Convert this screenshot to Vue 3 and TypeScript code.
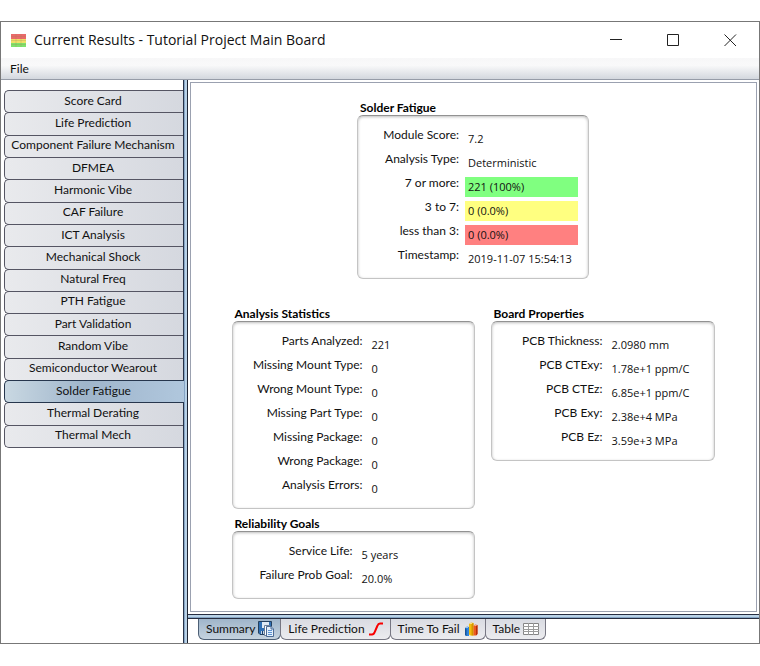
<script setup lang="ts">
import { ref } from 'vue'

interface Row {
  label: string
  value: string
  tone?: 'good' | 'warn' | 'bad'
}

interface Group {
  title: string
  kind: string
  rows: Row[]
}

const modules: string[] = [
  'Score Card',
  'Life Prediction',
  'Component Failure Mechanism',
  'DFMEA',
  'Harmonic Vibe',
  'CAF Failure',
  'ICT Analysis',
  'Mechanical Shock',
  'Natural Freq',
  'PTH Fatigue',
  'Part Validation',
  'Random Vibe',
  'Semiconductor Wearout',
  'Solder Fatigue',
  'Thermal Derating',
  'Thermal Mech',
]

const views: string[] = ['Summary', 'Life Prediction', 'Time To Fail', 'Table']

const activeModule = ref('Solder Fatigue')
const activeView = ref('Summary')

const columns: { name: string; groups: Group[] }[] = [
  {
    name: 'top',
    groups: [
      {
        title: 'Solder Fatigue',
        kind: 'score',
        rows: [
          { label: 'Module Score:', value: '7.2' },
          { label: 'Analysis Type:', value: 'Deterministic' },
          { label: '7 or more:', value: '221 (100%)', tone: 'good' },
          { label: '3 to 7:', value: '0 (0.0%)', tone: 'warn' },
          { label: 'less than 3:', value: '0 (0.0%)', tone: 'bad' },
          { label: 'Timestamp:', value: '2019-11-07 15:54:13' },
        ],
      },
    ],
  },
  {
    name: 'left',
    groups: [
      {
        title: 'Analysis Statistics',
        kind: 'stats',
        rows: [
          { label: 'Parts Analyzed:', value: '221' },
          { label: 'Missing Mount Type:', value: '0' },
          { label: 'Wrong Mount Type:', value: '0' },
          { label: 'Missing Part Type:', value: '0' },
          { label: 'Missing Package:', value: '0' },
          { label: 'Wrong Package:', value: '0' },
          { label: 'Analysis Errors:', value: '0' },
        ],
      },
      {
        title: 'Reliability Goals',
        kind: 'goals',
        rows: [
          { label: 'Service Life:', value: '5 years' },
          { label: 'Failure Prob Goal:', value: '20.0%' },
        ],
      },
    ],
  },
  {
    name: 'right',
    groups: [
      {
        title: 'Board Properties',
        kind: 'board',
        rows: [
          { label: 'PCB Thickness:', value: '2.0980 mm' },
          { label: 'PCB CTExy:', value: '1.78e+1 ppm/C' },
          { label: 'PCB CTEz:', value: '6.85e+1 ppm/C' },
          { label: 'PCB Exy:', value: '2.38e+4 MPa' },
          { label: 'PCB Ez:', value: '3.59e+3 MPa' },
        ],
      },
    ],
  },
]
</script>

<template>
  <div class="window">
    <header class="titlebar">
      <svg class="app-icon" viewBox="0 0 15 13" aria-hidden="true">
        <rect width="15" height="5" fill="#e96a6a" />
        <rect y="5" width="15" height="4" fill="#f0e068" />
        <rect y="9" width="15" height="4" fill="#7fe36c" />
        <path d="M0 2.5h15M0 6.5h15M0 10.5h15M5 0v13M10 0v13" stroke="#a08050" stroke-opacity=".25" />
      </svg>
      <h1>Current Results - Tutorial Project Main Board</h1>
      <div class="controls">
        <button type="button" aria-label="Minimize">
          <svg viewBox="0 0 13 13"><path d="M0 5.5h12" /></svg>
        </button>
        <button type="button" aria-label="Maximize">
          <svg viewBox="0 0 13 13"><path d="M.5 .5h11v11H.5z" /></svg>
        </button>
        <button type="button" aria-label="Close">
          <svg viewBox="0 0 13 13"><path d="M.5 .5l11.5 11.5M12 .5L.5 12" /></svg>
        </button>
      </div>
    </header>

    <nav class="menubar"><button type="button">File</button></nav>

    <div class="body">
      <nav class="modules">
        <button
          v-for="name in modules"
          :key="name"
          type="button"
          :class="{ active: name === activeModule }"
          @click="activeModule = name"
        >{{ name }}</button>
      </nav>

      <main class="main">
        <div class="panel">
          <section v-for="col in columns" :key="col.name" class="column" :class="col.name">
            <div v-for="group in col.groups" :key="group.title" class="group" :class="group.kind">
              <h2>{{ group.title }}</h2>
              <dl>
                <template v-for="row in group.rows" :key="row.label">
                  <dt>{{ row.label }}</dt>
                  <dd :class="row.tone">{{ row.value }}</dd>
                </template>
              </dl>
            </div>
          </section>
        </div>

        <nav class="views">
          <button
            v-for="view in views"
            :key="view"
            type="button"
            :class="{ active: view === activeView }"
            @click="activeView = view"
          >
            <span>{{ view }}</span>
            <svg v-if="view === 'Summary'" viewBox="0 0 16 16" aria-hidden="true">
              <path d="M.5 .5h13v13H2L.5 12z" fill="#2f6fb4" stroke="#24405f" />
              <path d="M4 1h7v6H4z" fill="#dfeaf5" />
              <path d="M3 10h4v3H3z" fill="#c4d4e4" />
              <path d="M4 10h1v3H4z" fill="#173d6e" />
              <path d="M6.500 4.500h5v10h-5z" fill="#fff" stroke="#6b7f99" />
              <path d="M8.500 5.500h4.500l2.500 2.500v7.500h-7z" fill="#e3effc" stroke="#4d6b94" />
              <path d="M13 5.500v2.500h2.500" fill="#bcd6f2" stroke="#4d6b94" />
              <path d="M10 9.500h4M10 11.500h4M10 13.500h4" stroke="#5b92d2" />
            </svg>
            <svg v-else-if="view === 'Life Prediction'" viewBox="0 0 16 16" aria-hidden="true">
              <path d="M1 13.500h3c1.500 0 2-.5 2.700-2.500l2.600-6c.7-1.800 1.200-2.500 2.700-2.500H15" fill="none" stroke="#f80000" stroke-width="2" />
            </svg>
            <svg v-else-if="view === 'Time To Fail'" viewBox="0 0 16 16" aria-hidden="true">
              <path d="M2 7l2-1.500L6 6v9H3l-1-1z" fill="#2f83dc" />
              <path d="M2 7l1.500 1V15L2 14z" fill="#185499" />
              <path d="M6 3l2-1.500L10.500 2v12.500H7.500L6 13.500z" fill="#f2bd10" />
              <path d="M8.500 3l2-1v12.500h-2z" fill="#d49400" />
              <path d="M10.500 5L12 3.500l2.500 .5v9l-1.500 1.500h-2.500z" fill="#ed5a20" />
              <path d="M13 5l1.500-1v9L13 14.500z" fill="#b52c0c" />
              <path d="M3 6.500h2M7 2.500h2M11.500 4.500h2" stroke="#fff" stroke-opacity=".5" />
            </svg>
            <svg v-else viewBox="0 0 16 16" aria-hidden="true">
              <path d="M.5 2.500h15v11H.5z" fill="#fff" stroke="#858585" />
              <path d="M0 5.500h16M0 8.500h16M0 10.500h16M5.500 2v12M10.500 2v12" stroke="#9b9b9b" />
            </svg>
          </button>
        </nav>
      </main>
    </div>
  </div>
</template>

<style>
body {
  margin: 0;
  background: #fff;
}
</style>

<style scoped>
.window {
  box-sizing: border-box;
  display: flex;
  flex-direction: column;
  min-height: calc(100vh - 43px);
  margin: 21px 0 22px;
  border: 1px solid #777;
  background: #fff;
  color: #111;
  font: 12px/16px Lato, "Open Sans", sans-serif;
}

button {
  margin: 0;
  padding: 0;
  border: 0;
  background: none;
  color: inherit;
  font: inherit;
}

.titlebar {
  display: flex;
  align-items: center;
  height: 36px;
  padding-left: 10px;
}

.app-icon {
  width: 15px;
  height: 13px;
}

h1 {
  flex: 1;
  margin: 0 0 0 8px;
  font-family: "Open Sans", sans-serif;
  font-size: 14px;
  font-weight: 400;
  line-height: 20px;
}

.controls {
  display: flex;
}

.controls button {
  display: flex;
  align-items: center;
  justify-content: center;
  width: 57px;
  height: 36px;
}

.controls svg {
  width: 13px;
  height: 13px;
  fill: none;
  stroke: #222;
}

.menubar {
  display: flex;
  align-items: center;
  height: 21px;
  padding-left: 9px;
  border-bottom: 1px solid #969ca8;
  background: linear-gradient(#f7f7f8, #f9f9fa 35%, #d3d7de);
}

.body {
  display: flex;
  flex: 1;
}

.modules {
  box-sizing: border-box;
  display: flex;
  flex-direction: column;
  align-self: flex-start;
  width: 182px;
  height: 367px;
  padding: 10px 0 0 3px;
}

.modules button {
  box-sizing: border-box;
  flex: 1 1 23px;
  margin-bottom: -1px;
  padding: 0 2px 2px 0;
  border: 1px solid #555563;
  border-right: 0;
  border-radius: 5px 0 0 5px;
  background: linear-gradient(90deg, #e9eaed, #d5d8df);
}

.modules button.active {
  z-index: 1;
  margin-right: -1px;
  border-color: #26364d;
  background: linear-gradient(90deg, #c9d8e2, #9fb5cb 45%, #b0c7dd);
}

.main {
  display: flex;
  flex: 1;
  flex-direction: column;
  min-width: 0;
  border-left: 5px solid #a9c2da;
  border-image: linear-gradient(90deg, #263349 1px, #86a5c5 1px 2px, #b9d2e7 2px 4px, #1d2433 4px) 0 0 0 5;
}

.panel {
  display: grid;
  flex: 1;
  grid-template-columns: auto auto;
  align-content: start;
  justify-content: center;
  gap: 27px 16px;
  margin: 2px;
  padding: 17px 1px 12px 0;
  border: 1px solid #9ba1b0;
}

.column {
  display: flex;
  flex-direction: column;
  gap: 7px;
}

.column.top {
  grid-column: 1 / -1;
  align-items: center;
}

h2 {
  margin: 0 0 0 3px;
  color: #000;
  font-size: 12px;
  font-weight: 700;
  line-height: 15px;
}

dl {
  box-sizing: border-box;
  display: grid;
  grid-auto-rows: 24px;
  column-gap: 6px;
  margin: 0;
  padding: 11px 10px 7px 0;
  border: 1px solid #c4c4c4;
  border-top-color: #929292;
  border-radius: 6px;
  box-shadow: inset 0 1px 3px #bdbdbd;
}

.score dl {
  grid-template-columns: 101px 113px;
}

.stats dl {
  grid-template-columns: 130px 95px;
}

.goals dl {
  grid-template-columns: 120px 105px;
}

.board dl {
  grid-template-columns: 111px 95px;
}

dt {
  line-height: 15px;
  text-align: right;
  white-space: nowrap;
}

dd {
  align-self: center;
  margin: 0;
  padding-left: 3px;
  font-family: "Open Sans", sans-serif;
  font-size: 11px;
  line-height: 20px;
  white-space: nowrap;
}

.good {
  background: #80ff80;
}

.warn {
  background: #ffff80;
}

.bad {
  background: #ff8080;
}

.views {
  display: flex;
  height: 24px;
  padding-left: 10px;
  border-top: 5px solid #a9c2da;
  border-image: linear-gradient(#252c40 1px, #b9d2e7 1px 3px, #86a5c5 3px 4px, #252c40 4px) 5 0 0 0;
}

.views button {
  box-sizing: border-box;
  display: flex;
  align-items: center;
  gap: 3px;
  height: 21px;
  margin-right: -1px;
  padding: 0 6px 0 7px;
  border: 1px solid #777783;
  border-top: 0;
  border-radius: 0 0 6px 6px;
  background: linear-gradient(#d9dbe2, #ececef);
}

.views button.active {
  border-color: #4d5f75;
  background: linear-gradient(#9fb5ca, #c5d3df);
}

.views svg {
  width: 16px;
  height: 16px;
}
</style>
